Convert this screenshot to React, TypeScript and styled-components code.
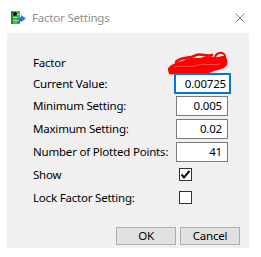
import React from "react";
import styled, { createGlobalStyle } from "styled-components";

const GlobalStyle = createGlobalStyle`
  html, body {
    margin: 0;
    padding: 0;
    background: #ffffff;
  }
  body {
    font-family: "Noto Sans", "Open Sans", sans-serif;
    font-size: 11.5px;
    letter-spacing: -0.2px;
    color: #000000;
  }
`;

const Window = styled.div`
  width: 261px;
  height: 257px;
  background: #ffffff;
  display: flex;
  flex-direction: column;
  box-sizing: border-box;
`;

const TitleBar = styled.div`
  height: 33px;
  flex: none;
  display: flex;
  align-items: center;
  box-sizing: border-box;
  padding: 2px 16px 0 11px;
`;

const TitleText = styled.span`
  margin-left: 6px;
  font-size: 11.5px;
  color: #8f8f8f;
  flex: 1;
`;

const Panel = styled.div`
  flex: 1;
  margin: 0 12px 9px 7px;
  background: #f0f0f0;
  display: flex;
  flex-direction: column;
  padding: 19px 0 0 26px;
  box-sizing: border-box;
`;

const Row = styled.div<{ $h: number }>`
  height: ${(p) => p.$h}px;
  display: grid;
  grid-template-columns: 143px auto;
  align-items: center;
`;

const Label = styled.span`
  white-space: nowrap;
  line-height: 16px;
`;

const Cell = styled.div`
  display: flex;
  align-items: center;
  height: 100%;
`;

const Input = styled.div<{ $focused?: boolean }>`
  box-sizing: border-box;
  width: ${(p) => (p.$focused ? 57 : 52)}px;
  height: ${(p) => (p.$focused ? 21 : 20)}px;
  margin-left: ${(p) => (p.$focused ? -2 : 0)}px;
  background: #ffffff;
  border: ${(p) => (p.$focused ? "2px solid #0078d7" : "1px solid #7a7a7a")};
  padding-right: ${(p) => (p.$focused ? 3 : 5)}px;
  display: flex;
  align-items: center;
  justify-content: flex-end;
  line-height: 16px;
`;

const CheckBox = styled.div`
  box-sizing: border-box;
  width: 13px;
  height: 13px;
  margin-left: 3px;
  background: #ffffff;
  border: 1px solid #333333;
  display: flex;
  align-items: center;
  justify-content: center;
`;

const Scribble = styled.svg`
  margin-left: -8px;
  margin-top: 1px;
  overflow: visible;
`;

const ButtonBar = styled.div`
  margin-top: auto;
  margin-bottom: 3px;
  padding-right: 9px;
  display: flex;
  justify-content: flex-end;
  gap: 4px;
`;

const Button = styled.div`
  box-sizing: border-box;
  width: 60px;
  height: 18px;
  background: #e1e1e1;
  border: 1px solid #adadad;
  display: flex;
  align-items: center;
  justify-content: center;
  line-height: 16px;
`;

const AppIcon = () => (
  <svg width="15" height="13" viewBox="0 0 15 13">
    <rect x="0" y="0" width="9" height="13" fill="#3fbf3f" />
    <rect x="0" y="3" width="9" height="1" fill="#8fe08f" />
    <rect x="0" y="6" width="9" height="1" fill="#8fe08f" />
    <rect x="0" y="9" width="9" height="1" fill="#8fe08f" />
    <rect x="0" y="0" width="2" height="13" fill="#1f8f2f" />
    <circle cx="4" cy="3" r="2" fill="#111111" />
    <path d="M5 7 L10 6 L10 4 L15 7.5 L10 11 L10 9 L7 9 Z" fill="#2a7fd4" />
    <path d="M6 13 L9 8 L11 9 Z" fill="#1a5fb0" />
  </svg>
);

const CloseIcon = () => (
  <svg width="10" height="10" viewBox="0 0 10 10">
    <path d="M0.5 0.5 L9.5 9.5 M9.5 0.5 L0.5 9.5" stroke="#808080" strokeWidth="1" />
  </svg>
);

const Check = () => (
  <svg width="11" height="11" viewBox="0 0 11 11">
    <path d="M1.5 5.5 L4 8.5 L9.5 2" stroke="#111111" strokeWidth="2" fill="none" />
  </svg>
);

const RedScribble = () => (
  <Scribble width="60" height="21" viewBox="0 0 60 21">
    <path
      d="M1 16 C5 10 11 11 17 8 C23 4 30 8 36 5 C42 3 47 7 52 5 C56 3 59 6 58 11 C56 16 48 15 43 18 C37 21 29 18 23 20 C15 21 9 20 2 20 Z"
      fill="#ff0000"
      stroke="#ff0000"
      strokeWidth="2.5"
      strokeLinejoin="round"
    />
    <path d="M8 9 C14 3 22 6 28 2 C34 0 38 4 44 2" stroke="#ff0000" strokeWidth="2.5" fill="none" strokeLinecap="round" />
    <path d="M47 6 C47 -1 56 -2 57 3 C58 7 52 8 50 6" stroke="#ff0000" strokeWidth="2" fill="none" />
    <path d="M6 14 C14 12 22 15 30 12 C38 10 44 13 52 11" stroke="#ff5050" strokeWidth="1" fill="none" />
  </Scribble>
);

const rows: { label: string; value?: string; h: number; focused?: boolean }[] = [
  { label: "Current Value:", value: "0.00725", h: 21, focused: true },
  { label: "Minimum Setting:", value: "0.005", h: 23 },
  { label: "Maximum Setting:", value: "0.02", h: 23 },
  { label: "Number of Plotted Points:", value: "41", h: 23 },
];

export default function App() {
  return (
    <>
      <GlobalStyle />
      <Window>
        <TitleBar>
          <AppIcon />
          <TitleText>Factor Settings</TitleText>
          <CloseIcon />
        </TitleBar>
        <Panel>
          <Row $h={21}>
            <Label>Factor</Label>
            <Cell>
              <RedScribble />
            </Cell>
          </Row>
          {rows.map((r) => (
            <Row $h={r.h} key={r.label}>
              <Label>{r.label}</Label>
              <Cell>
                <Input $focused={r.focused}>{r.value}</Input>
              </Cell>
            </Row>
          ))}
          <Row $h={23}>
            <Label>Show</Label>
            <Cell>
              <CheckBox>
                <Check />
              </CheckBox>
            </Cell>
          </Row>
          <Row $h={23}>
            <Label>Lock Factor Setting:</Label>
            <Cell>
              <CheckBox />
            </Cell>
          </Row>
          <ButtonBar>
            <Button>OK</Button>
            <Button>Cancel</Button>
          </ButtonBar>
        </Panel>
      </Window>
    </>
  );
}
